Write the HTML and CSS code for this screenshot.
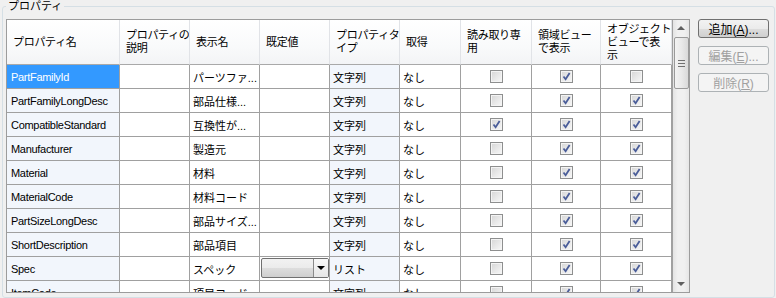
FILE: index.html
```html
<!DOCTYPE html>
<html lang="ja">
<head>
  <meta charset="UTF-8">
  <title>プロパティ</title>
  <link rel="stylesheet" href="styles.css">
</head>
<body>

  <fieldset class="group">
    <legend>プロパティ</legend>
    <div class="group-body">
      <div class="grid">
        <div class="sheet" id="sheet">
          <div class="hd">プロパティ名</div>
          <div class="hd">プロパティの<br>説明</div>
          <div class="hd">表示名</div>
          <div class="hd">既定値</div>
          <div class="hd">プロパティタ<br>イプ</div>
          <div class="hd">取得</div>
          <div class="hd">読み取り専<br>用</div>
          <div class="hd">領域ビュー<br>で表示</div>
          <div class="hd">オブジェクト<br>ビューで表<br>示</div>
          <!-- 行はスクリプトで追加 -->
        </div>
        <div class="vscroll">
          <div class="vs-btn"><span class="arrow up"></span></div>
          <div class="vs-thumb"><span></span><span></span><span></span></div>
          <div class="vs-track"></div>
          <div class="vs-btn"><span class="arrow down"></span></div>
        </div>
      </div>
      <div class="actions">
        <button class="btn">追加(<u>A</u>)...</button>
        <button class="btn" disabled>編集(<u>E</u>)...</button>
        <button class="btn" disabled>削除(<u>R</u>)</button>
      </div>
    </div>
  </fieldset>

  <script>
    // name, 表示名, 型, 読み取り専用, 領域ビュー, オブジェクトビュー
    const props = [
      ['PartFamilyId', 'パーツファ...', '文字列', 0, 1, 0],
      ['PartFamilyLongDesc', '部品仕様...', '文字列', 0, 1, 1],
      ['CompatibleStandard', '互換性が...', '文字列', 1, 1, 1],
      ['Manufacturer', '製造元', '文字列', 0, 1, 1],
      ['Material', '材料', '文字列', 0, 1, 1],
      ['MaterialCode', '材料コード', '文字列', 0, 1, 1],
      ['PartSizeLongDesc', '部品サイズ...', '文字列', 0, 1, 1],
      ['ShortDescription', '部品項目', '文字列', 0, 1, 1],
      ['Spec', 'スペック', 'リスト', 0, 1, 1],
      ['ItemCode', '項目コード', '文字列', 0, 1, 1]
    ];

    const check = '<svg viewBox="0 0 11 11" width="11" height="11"><path d="M2.5 5.5 L4.6 8.2 L8.6 2" fill="none" stroke="#4a5d99" stroke-width="1.8"/></svg>';

    function box(on) {
      return `<div class="cell mid"><span class="chk">${on ? check : ''}</span></div>`;
    }

    const sheet = document.getElementById('sheet');
    let html = '';
    props.forEach((p, i) => {
      const def = p[2] === 'リスト' ? '<span class="combo"><span class="combo-btn"><span class="arrow down dark"></span></span></span>' : '';
      html += `
        <div class="cell name ro${i === 0 ? ' sel' : ''}">${p[0]}</div>
        <div class="cell"></div>
        <div class="cell">${p[1]}</div>
        <div class="cell def">${def}</div>
        <div class="cell ro">${p[2]}</div>
        <div class="cell">なし</div>
        ${box(p[3])}${box(p[4])}${box(p[5])}
      `;
    });
    sheet.insertAdjacentHTML('beforeend', html);
  </script>

</body>
</html>
```

FILE: styles.css
```css
body {
  margin: 0;
  background: #f0f0f0;
  font-family: 'Liberation Sans', 'Noto Sans CJK JP', sans-serif;
  font-size: 11px;
  color: #000;
}

.group {
  margin: 0 1px 0 2px;
  padding: 7px 5px 4px 3px;
  border: 1px solid #d5dfe5;
  border-radius: 3px;
  min-width: 0;
}

.group legend {
  padding: 0 2px;
  line-height: 12px;
}

.group-body {
  display: flex;
  gap: 8px;
  align-items: flex-start;
}

.grid {
  flex: 1;
  display: flex;
  height: 272px;
  border: 1px solid #9c9c9c;
  background: #fff;
}

.sheet {
  width: 665px;
  overflow: hidden;
  display: grid;
  grid-template-columns: 113px 70px 70px 70px 70px 61px 71px 69px 71px;
  grid-template-rows: 45px;
  grid-auto-rows: 24px;
}

.hd {
  display: flex;
  align-items: center;
  padding-left: 6px;
  line-height: 13px;
  letter-spacing: -0.3px;
  white-space: nowrap;
  overflow: hidden;
  background: linear-gradient(#ffffff, #f9fafb 60%, #f3f4f6);
  border-right: 1px solid #e1e3e7;
  border-bottom: 1px solid #a9a9a9;
}

.cell {
  display: flex;
  align-items: center;
  padding-left: 3px;
  white-space: nowrap;
  overflow: hidden;
  border-right: 1px solid #a0a0a0;
  border-bottom: 1px solid #a0a0a0;
}

.cell.name {
  padding-left: 4px;
  letter-spacing: -0.3px;
}

.cell.ro {
  background: #f2f6fc;
}

.cell.sel {
  background: #3399ff;
  color: #fff;
}

.cell.mid {
  justify-content: center;
  padding-left: 0;
}

.cell.def {
  padding: 1px 0 2px 1px;
  align-items: stretch;
}

.chk {
  box-sizing: border-box;
  width: 13px;
  height: 13px;
  border: 1px solid #8e8f8f;
  background: linear-gradient(135deg, #d6d6d6, #f8f8f8);
  box-shadow: inset 0 0 0 1px #f4f4f4;
  display: flex;
  align-items: center;
  justify-content: center;
}

.combo {
  flex: 1;
  display: flex;
  justify-content: flex-end;
  border: 1px solid #707070;
  border-radius: 2px;
  background: linear-gradient(#f2f2f2, #ebebeb 50%, #dddddd 51%, #cfcfcf);
}

.combo-btn {
  width: 14px;
  display: flex;
  align-items: center;
  justify-content: center;
  border-left: 1px solid #8a8a8a;
  background: linear-gradient(#f8f8f8, #e6e6e6);
}

.vscroll {
  width: 16px;
  display: flex;
  flex-direction: column;
  background: linear-gradient(90deg, #e3e3e3, #f0f0f0 30%, #f0f0f0 70%, #e6e6e6);
  border-left: 1px solid #a0a0a0;
}

.vs-btn {
  height: 16px;
  display: flex;
  align-items: center;
  justify-content: center;
}

.vs-thumb {
  height: 50px;
  margin: 1px 0 0 1px;
  width: 13px;
  border: 1px solid #9a9a9a;
  border-radius: 2px;
  background: linear-gradient(90deg, #f3f3f3, #e9e9e9 50%, #d9d9d9);
  display: flex;
  flex-direction: column;
  align-items: center;
  justify-content: center;
  gap: 2px;
}

.vs-thumb span {
  width: 7px;
  height: 1px;
  background: #707070;
}

.vs-track {
  flex: 1;
}

.arrow {
  width: 0;
  height: 0;
  border-left: 4px solid transparent;
  border-right: 4px solid transparent;
}

.arrow.up {
  border-bottom: 4px solid #606060;
}

.arrow.down {
  border-top: 4px solid #606060;
}

.arrow.dark {
  border-top-color: #000;
}

.actions {
  width: 72px;
  display: flex;
  flex-direction: column;
  gap: 8px;
}

.btn {
  height: 19px;
  padding: 0;
  font-family: inherit;
  font-size: 12px;
  color: #000;
  border: 1px solid #707070;
  border-radius: 3px;
  background: linear-gradient(#f2f2f2, #ebebeb 50%, #dddddd 51%, #cfcfcf);
}

.btn:disabled {
  color: #a0a0a0;
  border-color: #adb2b5;
  background: #f4f4f4;
}
```
